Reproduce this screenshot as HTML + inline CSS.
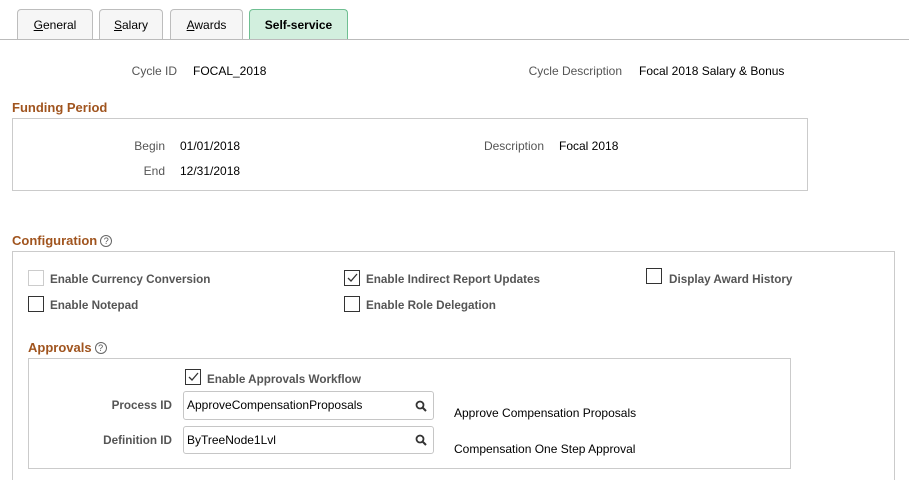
<!DOCTYPE html>
<html style="overflow:hidden;width:909px;height:481px"><head><style>
*{margin:0;padding:0;box-sizing:border-box}
body{width:909px;height:481px;background:#fff;font-family:"Liberation Sans",Arial,sans-serif;font-size:12px;color:#000;position:relative;overflow:hidden}
.a{position:absolute;line-height:14px;white-space:nowrap}
.l{color:#555;text-align:right}
.cb{color:#555;font-weight:bold;font-size:11.7px}
.h{color:#a0541e;font-weight:bold;font-size:13px}
.box{position:absolute;border:1px solid #cbcbcb}
.tab{position:absolute;top:9px;height:31px;border:1px solid #bdbdbd;border-bottom:none;border-radius:4px 4px 0 0;background:#f6f6f6;text-align:center;line-height:30px;font-size:12px;color:#000}
.tab u{text-decoration:underline}
.chk{position:absolute;width:16px;height:16px;border:1px solid #333;background:#fff}
.chk.d{border-color:#ccc}
.q{display:inline-block;width:12px;height:12px;border:1px solid #666;border-radius:50%;font-size:9px;line-height:10px;text-align:center;color:#555;font-weight:normal;vertical-align:1px;margin-left:3px}
.inp{position:absolute;height:29px;border:1px solid #c6c6c6;border-radius:3px;background:#fff;padding-left:3px;line-height:27px;font-size:12px}
</style></head><body>
<div class="tab" style="left:17px;width:76px"><u>G</u>eneral</div>
<div class="tab" style="left:99px;width:64px"><u>S</u>alary</div>
<div class="tab" style="left:170px;width:73px"><u>A</u>wards</div>
<div class="tab" style="left:249px;width:99px;background:#d2efde;border-color:#6fbf92;font-weight:bold">Self-service</div>
<div style="position:absolute;left:0;top:39px;width:909px;height:1px;background:#bbb"></div>

<div class="a l" style="right:732px;top:64px">Cycle ID</div>
<div class="a" style="left:193px;top:64px">FOCAL_2018</div>
<div class="a l" style="right:287px;top:64px">Cycle Description</div>
<div class="a" style="left:639px;top:64px">Focal 2018 Salary &amp; Bonus</div>

<div class="a h" style="left:12px;top:101px">Funding Period</div>
<div class="box" style="left:12px;top:118px;width:796px;height:73px"></div>
<div class="a l" style="right:744px;top:139px">Begin</div>
<div class="a" style="left:180px;top:139px">01/01/2018</div>
<div class="a l" style="right:744px;top:164px">End</div>
<div class="a" style="left:180px;top:164px">12/31/2018</div>
<div class="a l" style="right:365px;top:139px">Description</div>
<div class="a" style="left:559px;top:139px">Focal 2018</div>

<div class="a h" style="left:12px;top:234px">Configuration<span class="q">?</span></div>
<div class="box" style="left:12px;top:251px;width:883px;height:229px;border-bottom:none"></div>
<div class="chk d" style="left:28px;top:270px"></div>
<div class="a cb" style="left:50px;top:273px">Enable Currency Conversion</div>
<div class="chk" style="left:28px;top:296px"></div>
<div class="a cb" style="left:50px;top:299px">Enable Notepad</div>
<div class="chk" style="left:344px;top:270px"><svg width="14" height="14" style="position:absolute;left:0;top:0"><path d="M3 7 L6 10 L12 3" stroke="#333" stroke-width="1.3" fill="none"/></svg></div>
<div class="a cb" style="left:366px;top:273px">Enable Indirect Report Updates</div>
<div class="chk" style="left:344px;top:296px"></div>
<div class="a cb" style="left:366px;top:299px">Enable Role Delegation</div>
<div class="chk" style="left:646px;top:268px"></div>
<div class="a cb" style="left:669px;top:273px">Display Award History</div>

<div class="a h" style="left:28px;top:341px">Approvals<span class="q">?</span></div>
<div class="box" style="left:28px;top:358px;width:763px;height:111px"></div>
<div class="chk" style="left:185px;top:369px"><svg width="14" height="14" style="position:absolute;left:0;top:0"><path d="M3 7 L6 10 L12 3" stroke="#333" stroke-width="1.3" fill="none"/></svg></div>
<div class="a cb" style="left:207px;top:373px">Enable Approvals Workflow</div>
<div class="a cb" style="right:737px;top:399px">Process ID</div>
<div class="inp" style="left:183px;top:391px;width:251px">ApproveCompensationProposals</div>
<div class="a cb" style="right:737px;top:434px">Definition ID</div>
<div class="inp" style="left:183px;top:426px;width:251px;height:28px">ByTreeNode1Lvl</div>
<svg style="position:absolute;left:415px;top:400px" width="12" height="12"><circle cx="5" cy="5" r="3.5" stroke="#333" stroke-width="1.8" fill="none"/><path d="M7.5 7.5 L11 11" stroke="#333" stroke-width="2"/></svg>
<svg style="position:absolute;left:415px;top:434px" width="12" height="12"><circle cx="5" cy="5" r="3.5" stroke="#333" stroke-width="1.8" fill="none"/><path d="M7.5 7.5 L11 11" stroke="#333" stroke-width="2"/></svg>
<div class="a" style="left:454px;top:406px">Approve Compensation Proposals</div>
<div class="a" style="left:454px;top:442px">Compensation One Step Approval</div>
</body></html>
